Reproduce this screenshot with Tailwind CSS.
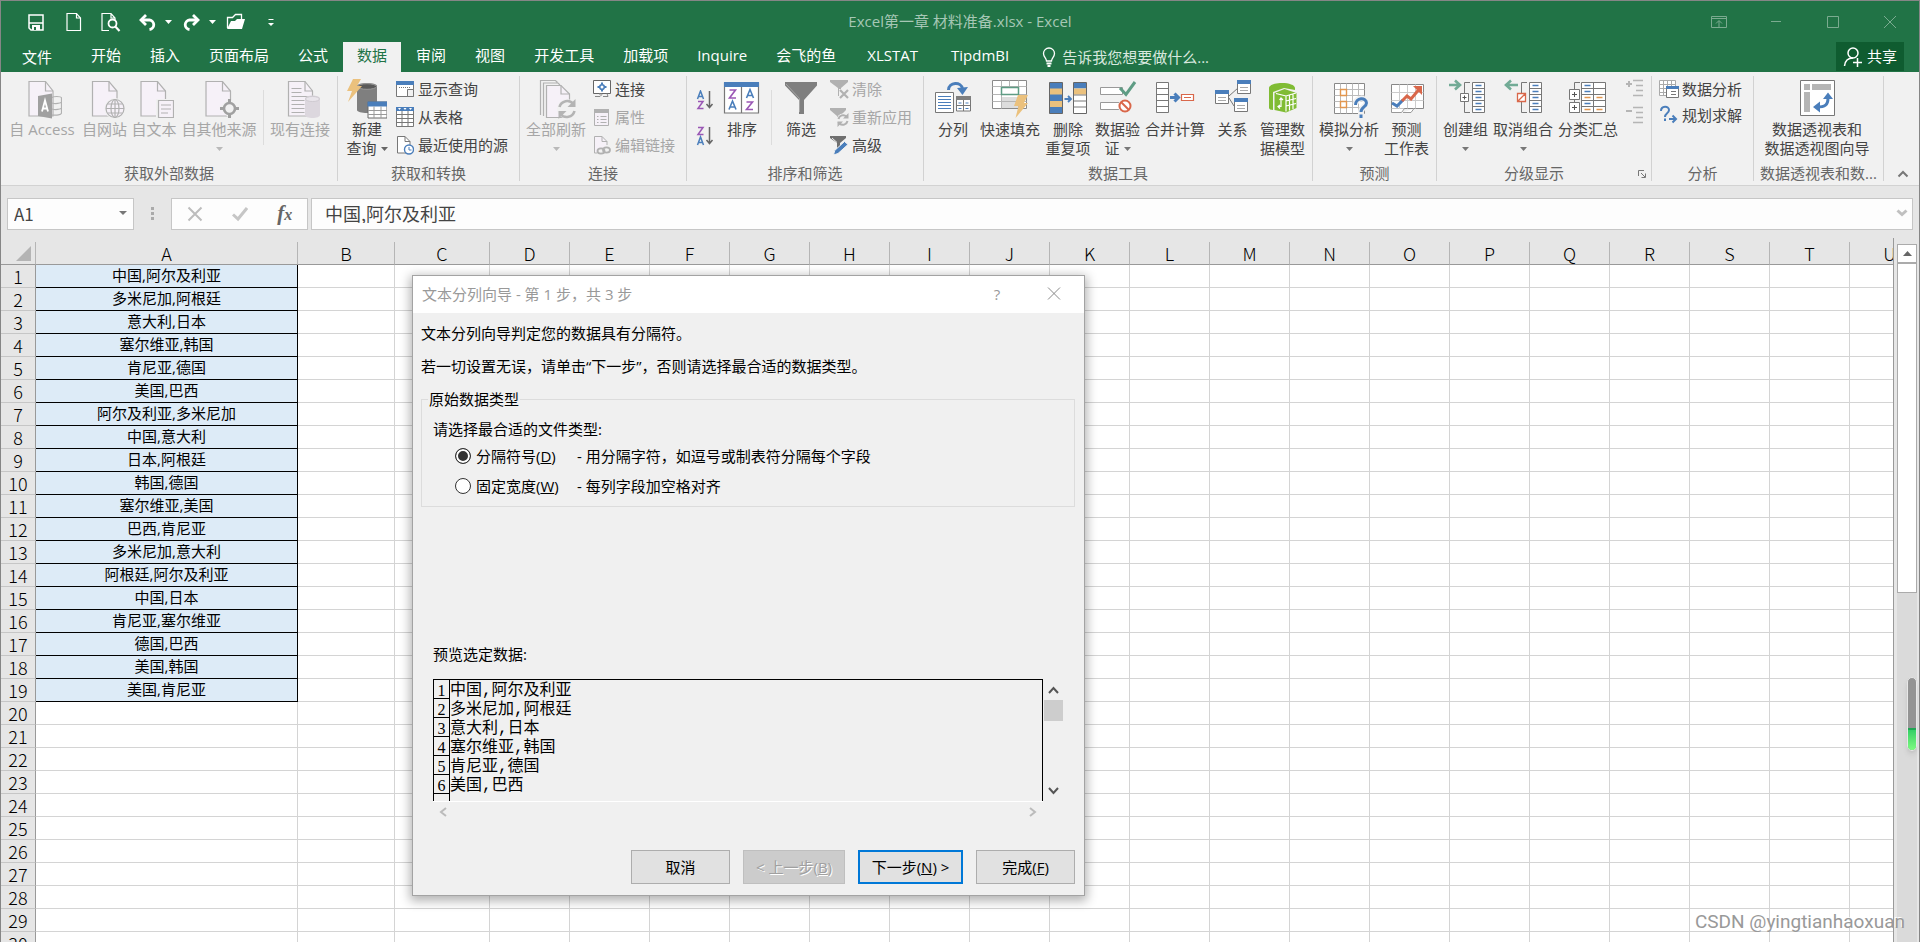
<!DOCTYPE html>
<html lang="zh-CN">
<head>
<meta charset="utf-8">
<title>Excel第一章 材料准备.xlsx - Excel</title>
<script src="https://cdn.jsdelivr.net/npm/@tailwindcss/browser@4"></script>
</head>
<body class="relative flex h-screen flex-col overflow-hidden border border-b-0 border-[#868686] bg-[#e6e6e6] font-['Open_Sans','Noto_Sans_CJK_SC',sans-serif] text-[15px] leading-[19px] text-[#444]">

<!-- Title bar -->
<header class="shrink-0 bg-[#217346] text-white">
  <div class="grid h-[41px] grid-cols-[1fr_auto_1fr] items-center">
    <div class="flex items-center pl-[27px]">
      <button aria-label="保存" class="w-[38px]"><svg class="h-5 w-4" viewBox="0 0 16 20" fill="none" stroke="#fff" stroke-width="1.5"><path d="M1 3h14v15H3l-2-2z"/><path d="M1 11h14"/><path d="M4 13h8v5H4z" fill="#fff" stroke="none"/><path d="M6 15h2v3H6z" fill="#217346" stroke="none"/></svg></button>
      <button aria-label="新建" class="w-[35px]"><svg class="h-5 w-4" viewBox="0 0 16 20" fill="none" stroke="#fff" stroke-width="1.200"><path d="M1 1.500h9.500l4 4.500v12.500H1z"/><path d="M10.500 1.500V6h4"/></svg></button>
      <button aria-label="打印预览" class="w-[37px]"><svg class="h-5 w-5" viewBox="0 0 20 20" fill="none" stroke="#fff" stroke-width="1.200"><path d="M8 18.500H1v-17h9l4 4.500v2M10 1.500V6h4"/><circle cx="11.500" cy="11.500" r="4" stroke-width="1.800"/><path d="M14.300 14.500l4.200 4.500" stroke-width="2.200"/></svg></button>
      <button aria-label="撤消" class="flex w-[44px] items-center gap-[7px]"><svg class="h-5 w-5" viewBox="0 0 20 20" fill="none" stroke="#fff" stroke-width="2.800"><path d="M3 8h8.500a5 4.800 0 0 1 0 9.500"/><path d="M8 3L3 8l5 5"/></svg><svg class="h-1 w-[7px]" viewBox="0 0 7 4"><path d="M0 0h7L3.500 4z" fill="#fff"/></svg></button>
      <button aria-label="恢复" class="flex w-[44px] items-center gap-[7px]"><svg class="h-5 w-5" viewBox="0 0 20 20" fill="none" stroke="#fff" stroke-width="2.800"><path d="M16 8H7.500a5 4.800 0 0 0 0 9.500"/><path d="M11 3l5 5-5 5"/></svg><svg class="h-1 w-[7px]" viewBox="0 0 7 4"><path d="M0 0h7L3.500 4z" fill="#fff"/></svg></button>
      <button aria-label="打开" class="w-[42px]"><svg class="h-5 w-5" viewBox="0 0 20 20"><path d="M1.500 16V5.500h5l3-3h6V7" fill="none" stroke="#fff" stroke-width="1.300"/><path d="M5 9h4l2-2h8l-3 10H1z" fill="#fff"/></svg></button>
      <button aria-label="自定义快速访问工具栏"><svg class="h-3 w-[6px]" viewBox="0 0 6 12"><path d="M.5 3.500h5" stroke="#fff"/><path d="M0 7h6L3 10z" fill="#fff"/></svg></button>
    </div>
    <h1 class="text-[#a6c7b5]">Excel第一章 材料准备.xlsx - Excel</h1>
    <div class="flex items-center justify-end gap-[41px] pr-[21px]">
      <button aria-label="功能区显示选项" class="w-4"><svg class="h-3 w-4" viewBox="0 0 16 12" fill="none" stroke="#7bab90"><path d="M.5.500h15v11H.5zM.5 2.500h15M8 11V5M5 7.500L8 4.500l3 3"/></svg></button>
      <button aria-label="最小化" class="w-4"><svg class="h-3 w-4" viewBox="0 0 16 12" fill="none" stroke="#7bab90"><path d="M3 5.500h10"/></svg></button>
      <button aria-label="最大化" class="w-4"><svg class="h-3 w-4" viewBox="0 0 16 12" fill="none" stroke="#7bab90"><path d="M2.500.500h11v11h-11z"/></svg></button>
      <button aria-label="关闭" class="w-4"><svg class="h-3 w-4" viewBox="0 0 16 12" fill="none" stroke="#7bab90"><path d="M2 0l12 12M14 0L2 12"/></svg></button>
    </div>
  </div>

  <nav class="flex h-[30px] items-center pr-[15px]" aria-label="功能区选项卡">
    <div class="flex h-full items-center gap-px whitespace-nowrap">
      <button class="ml-[7px] mr-[10px] h-full px-[14px]">文件</button>
      <button class="h-full px-[14px] pb-[3px]">开始</button>
      <button class="h-full px-[14px] pb-[3px]">插入</button>
      <button class="h-full px-[14px] pb-[3px]">页面布局</button>
      <button class="h-full px-[14px] pb-[3px]">公式</button>
      <button class="h-full bg-[#f1f1f1] px-[14px] pb-[3px] text-[#217346]">数据</button>
      <button class="h-full px-[14px] pb-[3px]">审阅</button>
      <button class="h-full px-[14px] pb-[3px]">视图</button>
      <button class="h-full px-[14px] pb-[3px]">开发工具</button>
      <button class="h-full px-[14px] pb-[3px]">加载项</button>
      <button class="h-full px-[14px] pb-[3px]">Inquire</button>
      <button class="h-full px-[14px] pb-[3px]">会飞的鱼</button>
      <button class="h-full px-4 pb-[3px]">XLSTAT</button>
      <button class="h-full px-4 pb-[3px]">TipdmBI</button>
      <button class="flex h-full items-center gap-[6px] px-4 text-[#d8e8df]"><svg class="h-5 w-[14px]" viewBox="0 0 14 20" fill="none" stroke="#fff" stroke-width="1.300"><path d="M4.500 14c0-3-3-4-3-7.500a5.500 5.500 0 0 1 11 0C12.500 10 9.500 11 9.500 14z"/><path d="M4.500 16.500h5M5.500 19h3" stroke-width="1.800"/></svg>告诉我您想要做什么...</button>
    </div>
    <button class="ml-auto flex h-[29px] w-[68px] items-center justify-center gap-1 self-start bg-[#0f5c30]"><svg class="h-5 w-[20px]" viewBox="0 0 20 20" fill="none" stroke="#fff" stroke-width="1.500"><circle cx="10" cy="6" r="5"/><path d="M1.500 19c.5-5 3-8 8.500-8M10 15.500h9M14.500 11v9"/></svg>共享</button>
  </nav>
</header>

<!-- Ribbon -->
<section aria-label="数据" class="flex h-[114px] shrink-0 items-start overflow-hidden whitespace-nowrap border-b border-[#d2d2d2] bg-[#f1f1f1]">

  <div class="w-[336px] shrink-0 pt-[6px]">
    <div class="flex h-[86px] items-start pl-[3px] text-[#a6a6a6]">
      <button disabled class="flex w-[76px] flex-col items-center pt-px">
        <svg class="h-[41px] w-10" viewBox="0 0 40 41" fill="none" stroke="#b1b1b1" stroke-width="1.200"><path d="M7 2.500h16.500L31 12v25H7z" fill="#f6f1f8"/><path d="M23.500 2.500V12H31"/><path d="M30 19c0-2 9.500-2 9.500 0v15c0 2-5 2.500-9.500 2M30 24c3 1 9 .5 9.500-1M30 30c3 1 9 .5 9.500-1"/><path d="M16 17l14-2.500v25L16 37z" fill="#a0a0a0" stroke="none"/><path d="M20 32.500l3-11 3 11M21 29.500h4.500" stroke="#fff" stroke-width="1.800"/></svg>
        <span>自 Access</span></button>
      <button disabled class="flex w-[49px] flex-col items-center pt-px">
        <svg class="h-[41px] w-10" viewBox="0 0 40 41" fill="none" stroke="#b1b1b1" stroke-width="1.200"><path d="M7.500 2.500H24L32 12v25H7.500z" fill="#f6f1f8"/><path d="M24 2.500V12h8"/><circle cx="30" cy="29.500" r="10.500" fill="#f1f1f1" stroke="none"/><circle cx="30" cy="29.500" r="9" fill="#f6f1f8"/><ellipse cx="30" cy="29.500" rx="4" ry="9"/><path d="M21 29.500h18M22.500 25h15M22.500 34h15M30 20.500v18"/></svg>
        <span>自网站</span></button>
      <button disabled class="flex w-[50px] flex-col items-center pt-px">
        <svg class="h-[41px] w-10" viewBox="0 0 40 41" fill="none" stroke="#b1b1b1" stroke-width="1.200"><path d="M7 2.500h16.500L31.500 12v25H7z" fill="#f6f1f8"/><path d="M23.500 2.500V12h8"/><path d="M22 20h18v20H22z" fill="#f1f1f1" stroke="none"/><path d="M24.500 21.500h15v17h-15z" fill="#f6f1f8"/><path d="M27 26h10M27 30h10M27 34h7"/></svg>
        <span>自文本</span></button>
      <button disabled class="flex w-[80px] flex-col items-center pt-px">
        <svg class="h-[41px] w-10" viewBox="0 0 40 41" fill="none" stroke="#b1b1b1" stroke-width="1.200"><path d="M7 2.500h16.500L31.500 12v25H7z" fill="#f6f1f8"/><path d="M23.500 2.500V12h8"/><path d="M20 29l10-10 10 10-10 10z" fill="#f1f1f1" stroke="none"/><circle cx="30.500" cy="29.500" r="5.500" stroke="#a0a0a0" stroke-width="2.600"/><path d="M30.500 20v4.500M30.500 34.500V39M21 29.500h4.500M35.500 29.500H40" stroke="#a0a0a0" stroke-width="3"/></svg>
        <span>自其他来源</span><svg class="mt-2 h-1 w-[7px]" viewBox="0 0 7 4"><path d="M0 0h7L3.500 4z" fill="#b9b9b9"/></svg></button>
      <div class="ml-1 mt-3 h-[55px] w-px bg-[#dcdcdc]"></div>
      <button disabled class="flex w-[72px] flex-col items-center pt-px">
        <svg class="h-[41px] w-10" viewBox="0 0 40 41" fill="none" stroke="#b1b1b1" stroke-width="1.200"><path d="M8.500 2.500H25L32.500 12v25h-24z" fill="#f6f1f8"/><path d="M25 2.500V12h7.500M11.500 9.500h10M11.500 13.500h10M11.500 17.500h18M11.500 21.500h13M11.500 25.500h13M11.500 29.500h13M11.500 33.500h13"/><path d="M25 19.500c0-4 15-4 15 0V36c0 4-15 4-15 0z" fill="#dcd7de" stroke="none"/><ellipse cx="32.500" cy="20" rx="7" ry="2.500" fill="#e9e5eb" stroke="#c9c5cb" stroke-width=".8"/></svg>
        <span>现有连接</span></button>
    </div>
    <h2 class="text-center text-[#666]">获取外部数据</h2>
  </div>
  <div class="mt-1 h-[105px] w-px shrink-0 bg-[#d2d2d2]"></div>

  <div class="w-[181px] shrink-0 pt-[6px]">
    <div class="flex h-[86px] items-start pl-[3px]">
      <button class="flex w-[52px] flex-col items-center pt-px">
        <svg class="h-[41px] w-10" viewBox="0 0 40 41"><path d="M10 7c0-4 20-4 20 0v24c0 4-20 4-20 0z" fill="#7f7f7f"/><ellipse cx="20" cy="7.500" rx="9.500" ry="2.800" fill="#595959" stroke="#999"/><path d="M6 0h8l-4 7h5L1 23l4-11H0z" fill="#ebc17d"/><path d="M21 23h19v16H21z" fill="#fff" stroke="#6b6b6b"/><path d="M20.500 22.500h20v5h-20z" fill="#4a7ebb"/><path d="M27 27.500V39M34 27.500V39M21 31.500h19M21 35.500h19" stroke="#999"/></svg>
        <span>新建</span><span class="flex items-center gap-1">查询<svg class="h-1 w-[7px]" viewBox="0 0 7 4"><path d="M0 0h7L3.500 4z" fill="#666"/></svg></span></button>
      <div class="ml-[3px] flex flex-col gap-[6px]">
        <button class="flex h-[22px] items-center gap-1"><svg class="h-5 w-[18px]" viewBox="0 0 18 20" fill="none" stroke="#777"><path d="M.5 3.500h17v14H.5z" fill="#fff"/><path d="M0 2h18v4H0z" fill="#4a7ebb" stroke="none"/><path d="M3 8.500h12" stroke-dasharray="1 1"/><path d="M11.500 10.500h6v7h-6z" fill="#f1f1f1"/></svg>显示查询</button>
        <button class="flex h-[22px] items-center gap-1"><svg class="h-5 w-[18px]" viewBox="0 0 18 20" fill="none" stroke="#777"><path d="M.5 2.500h17v17H.5z" fill="#fff"/><path d="M6 4v15M12 4v15M0 7.500h18M0 11.500h18M0 15.500h18"/><path d="M0 0h18v4H0z" fill="#4a7ebb" stroke="none"/><path d="M2 1h3L3.500 3zM7.500 1h3L9 3zM13 1h3l-1.500 2z" fill="#fff" stroke="none"/></svg>从表格</button>
        <button class="flex h-[22px] items-center gap-1"><svg class="h-5 w-[18px]" viewBox="0 0 18 20" fill="none" stroke="#777"><path d="M1.500 1.500H9l5 5V18H1.500z" fill="#fff"/><path d="M9 1.500v5h5"/><circle cx="13" cy="14.500" r="4.500" fill="#fff" stroke="#4a7ebb" stroke-width="1.400"/><path d="M13 12v3h2.500" stroke="#4a7ebb"/></svg>最近使用的源</button>
      </div>
    </div>
    <h2 class="text-center text-[#666]">获取和转换</h2>
  </div>
  <div class="mt-1 h-[105px] w-px shrink-0 bg-[#d2d2d2]"></div>

  <div class="w-[166px] shrink-0 pt-[6px]">
    <div class="flex h-[86px] items-start pl-1 text-[#a6a6a6]">
      <button disabled class="flex w-[64px] flex-col items-center pt-px">
        <svg class="h-[41px] w-10" viewBox="0 0 40 41" fill="none" stroke="#b1b1b1" stroke-width="1.200"><path d="M4.500 36V1.500h15l2 2M7.500 37V4H22l2 2"/><path d="M10.500 6.500H25L33.500 15v23.500h-23z" fill="#f6f1f8"/><path d="M25 6.500V15h8.500"/><circle cx="31" cy="30" r="10" fill="#f1f1f1" stroke="none"/><path d="M23.500 28a8 8 0 0 1 14-3M38.500 32a8 8 0 0 1-14 3" stroke="#b4b4b4" stroke-width="2.600"/><path d="M39.500 20v8h-8zM22.500 40v-8h8z" fill="#b4b4b4" stroke="none"/></svg>
        <span>全部刷新</span><svg class="mt-2 h-1 w-[7px]" viewBox="0 0 7 4"><path d="M0 0h7L3.500 4z" fill="#b9b9b9"/></svg></button>
      <div class="ml-[5px] flex flex-col gap-[6px]">
        <button class="flex h-[22px] items-center gap-1 text-[#444]"><svg class="h-5 w-[18px]" viewBox="0 0 18 20" fill="none" stroke="#666"><path d="M.5 1.500h17v13H.5z" fill="#fff"/><circle cx="9" cy="8" r="2.300" stroke="#4a7ebb" stroke-width="1.600"/><path d="M9 3.500v2M9 10.500v2M4.500 8h2M11.500 8h2" stroke="#4a7ebb" stroke-width="2"/><path d="M2 17.500h5l2-2M10 17.500h5l-1-3M6 15h3" stroke="#888"/></svg>连接</button>
        <button disabled class="flex h-[22px] items-center gap-1"><svg class="h-5 w-[18px]" viewBox="0 0 18 20" fill="none" stroke="#b1b1b1"><path d="M1.500 2.500h14v16h-14z" fill="#f6f1f8"/><path d="M1 2h15v4H1z" fill="#b1b1b1" stroke="none"/><path d="M7.500 9.500h6M7.500 12.500h6M7.500 15.500h6M4 9.500h1.500M4 12.500h1.500M4 15.500h1.500"/></svg>属性</button>
        <button disabled class="flex h-[22px] items-center gap-1"><svg class="h-5 w-[18px]" viewBox="0 0 18 20" fill="none" stroke="#b1b1b1"><path d="M1.500 18V1.500H9l5 5V10" fill="#f6f1f8"/><path d="M9 1.500v5h5M1.500 18H4"/><ellipse cx="8" cy="16" rx="3.500" ry="2.600" stroke-width="1.800"/><ellipse cx="13.500" cy="15" rx="3.500" ry="2.600" stroke-width="1.800"/></svg>编辑链接</button>
      </div>
    </div>
    <h2 class="text-center text-[#666]">连接</h2>
  </div>
  <div class="mt-1 h-[105px] w-px shrink-0 bg-[#d2d2d2]"></div>

  <div class="w-[236px] shrink-0 pt-[6px]">
    <div class="flex h-[86px] items-start pl-2">
      <div class="flex flex-col gap-4 pt-3">
        <button aria-label="升序" class="h-5 w-5"><svg class="h-5 w-5" viewBox="0 0 20 20" fill="none" stroke-width="1.500"><path d="M2.500 9l3-8 3 8M3.500 6.500h4" stroke="#4a7ebb"/><path d="M3 11.500h5L3 18.500h5.500" stroke="#9a57b5"/><path d="M14.500 1v16M11.500 14l3 3.500 3-3.500" stroke="#666"/></svg></button>
        <button aria-label="降序" class="h-5 w-5"><svg class="h-5 w-5" viewBox="0 0 20 20" fill="none" stroke-width="1.500"><path d="M3 1.500h5L3 8.500h5.500" stroke="#9a57b5"/><path d="M2.500 19l3-8 3 8M3.500 16.500h4" stroke="#4a7ebb"/><path d="M14.500 1v16M11.500 14l3 3.500 3-3.500" stroke="#666"/></svg></button>
      </div>
      <button class="ml-[5px] flex w-[44px] flex-col items-center pt-px">
        <svg class="h-[41px] w-10" viewBox="0 0 40 41" fill="none" stroke-width="1.600"><path d="M2.500 4v30h34V4zM19.500 4v30" fill="#fff" stroke="#777" stroke-width="1.200"/><path d="M2 3h35v5H2z" fill="#4a7ebb"/><path d="M7.500 11h6l-6 8h6.500M24.500 23h6l-6 7.500h6.500" stroke="#9a57b5"/><path d="M7 30.500l3.500-8.500 3.500 8.500M8.500 28h4.500M24.500 19L28 10.500l3.500 8.500M26 16.500h4.500" stroke="#4a7ebb"/></svg>
        <span>排序</span></button>
      <div class="ml-[7px] mt-3 h-[55px] w-px bg-[#dcdcdc]"></div>
      <button class="ml-[7px] flex w-[44px] flex-col items-center pt-px">
        <svg class="h-[41px] w-10" viewBox="0 0 40 41"><path d="M4 3h32v3.500L23 21v14h-5V21L4 6.500z" fill="#7f7f7f"/><path d="M5 5l13.500 14.500V33" fill="none" stroke="#a5a5a5"/></svg>
        <span>筛选</span></button>
      <div class="ml-[6px] flex flex-col gap-[6px]">
        <button disabled class="flex h-[22px] items-center gap-[3px] text-[#a6a6a6]"><svg class="h-5 w-5" viewBox="0 0 20 20"><path d="M1 1h18v2l-7 6v8H9V9L1 3z" fill="#b1b1b1"/><path d="M10 10h10v10H10z" fill="#f1f1f1"/><path d="M11 11l8 8M19 11l-8 8" stroke="#b1b1b1" stroke-width="2.200"/></svg>清除</button>
        <button disabled class="flex h-[22px] items-center gap-[3px] text-[#a6a6a6]"><svg class="h-5 w-5" viewBox="0 0 20 20"><path d="M1 1h16v2l-6 6v7H8V9L1 3z" fill="#b1b1b1"/><circle cx="14" cy="13" r="6.500" fill="#f1f1f1"/><path d="M9.500 12a4.800 4.800 0 0 1 8-2.500M18.500 14a4.800 4.800 0 0 1-8 2.500" fill="none" stroke="#b1b1b1" stroke-width="2"/><path d="M19.500 6v5.500H14zM8.500 20v-5.500H14z" fill="#b1b1b1"/></svg>重新应用</button>
        <button class="flex h-[22px] items-center gap-[3px]"><svg class="h-5 w-5" viewBox="0 0 20 20"><path d="M1 1h16v2l-6 5v8H8V8L1 3z" fill="#6f6f6f"/><path d="M3 3l5 4.500" stroke="#f1f1f1"/><path d="M4.500 20l1.200-4.500L15.500 6.500 19 9.500l-10 9z" fill="#4a7ebb" stroke="#f1f1f1"/></svg>高级</button>
      </div>
    </div>
    <h2 class="text-center text-[#666]">排序和筛选</h2>
  </div>
  <div class="mt-1 h-[105px] w-px shrink-0 bg-[#d2d2d2]"></div>

  <div class="w-[388px] shrink-0 pt-[6px]">
    <div class="flex h-[86px] items-start pl-[6px]">
      <button class="flex w-[46px] flex-col items-center pt-px">
        <svg class="h-[41px] w-10" viewBox="0 0 40 41" fill="none"><path d="M2.500 13.500h18v20h-18z" fill="#fff" stroke="#777"/><path d="M5 17.500h13M5 20.500h13M5 23.500h13M5 26.500h13M5 29.500h13" stroke="#4a7ebb" stroke-width="1.200"/><path d="M23.500 18.500h14v13.500h-14zM30.500 18.500V32M23.500 26.500h14" fill="#fff" stroke="#777"/><path d="M23 17h15v4H23z" fill="#7f7f7f"/><path d="M25.500 24h3M32.500 24h3M25.500 29.500h3M32.500 29.500h3" stroke="#4a7ebb"/><path d="M15.500 11c0-8 13-9 14-1" stroke="#4a7ebb" stroke-width="3"/><path d="M24 9l5.500 7L35 8" fill="#4a7ebb"/></svg>
        <span>分列</span></button>
      <button class="flex w-[68px] flex-col items-center pt-px">
        <svg class="h-[41px] w-10" viewBox="0 0 40 41" fill="none"><path d="M2.500 1.500h34v28h-34z" fill="#fff" stroke="#8a8a8a"/><path d="M11 18h17v11H11z" fill="#ddd"/><path d="M11.500 1.500v28M28.500 1.500v28M2.500 7.500h34M2.500 15.500h34M2.500 22.500h34M19.500 1.500v6" stroke="#b5b5b5"/><path d="M11.500 8.500h17v7h-17z" fill="#fff" stroke="#5e9c84" stroke-width="1.500"/><path d="M28 16h10l-4 8h4L25.500 39l3-12H24z" fill="#ebc17d"/></svg>
        <span>快速填充</span></button>
      <button class="flex w-[48px] flex-col items-center pt-px">
        <svg class="h-[41px] w-10" viewBox="0 0 40 41" fill="none"><path d="M1.500 3.500h13v31h-13z" fill="#4a7ebb" stroke="#666"/><path d="M2 9.500h12v6H2zM2 22h12v6H2z" fill="#ebc17d"/><path d="M25.500 3.500h13v31h-13z" fill="#fff" stroke="#666"/><path d="M26 4h12v5.500H26z" fill="#4a7ebb"/><path d="M26 9.500h12v6H26z" fill="#ebc17d"/><path d="M25.500 16h13M25.500 22h13M25.500 28h13" stroke="#777"/><path d="M16.500 20H23M20 17l3 3-3 3" stroke="#4a7ebb" stroke-width="1.800"/></svg>
        <span>删除</span><span>重复项</span></button>
      <button class="flex w-[51px] flex-col items-center pt-px">
        <svg class="h-[41px] w-10" viewBox="0 0 40 41" fill="none"><path d="M2.500 8.500h22v7h-22zM2.500 23.500h24v7h-24z" fill="#fff" stroke="#999"/><path d="M22 9l6 6.500L37 3" stroke="#5e9c84" stroke-width="3"/><circle cx="27" cy="27" r="7" fill="#f1f1f1"/><circle cx="27" cy="27" r="5.500" stroke="#d9674a" stroke-width="2" fill="#fff"/><path d="M23 23l8 8" stroke="#d9674a" stroke-width="2"/></svg>
        <span>数据验</span><span class="flex items-center gap-1">证<svg class="h-1 w-[7px]" viewBox="0 0 7 4"><path d="M0 0h7L3.500 4z" fill="#777"/></svg></span></button>
      <button class="flex w-[64px] flex-col items-center pt-px">
        <svg class="h-[41px] w-10" viewBox="0 0 40 41" fill="none"><path d="M1.500 3.500h12v30h-12zM1.500 9.500h12M1.500 15.500h12M1.500 21.500h12M1.500 27.500h12" fill="#fff" stroke="#777"/><path d="M15 18.500h8M19.500 14.500l4 4-4 4" stroke="#4a7ebb" stroke-width="3"/><path d="M26.500 15.500h12v6h-12zM29 18.500h7" fill="#fff" stroke="#d9674a" stroke-width="1.200"/></svg>
        <span>合并计算</span></button>
      <button class="flex w-[51px] flex-col items-center pt-px">
        <svg class="h-[41px] w-10" viewBox="0 0 40 41" fill="none"><path d="M16 17l9-8M16 19l5 8" stroke="#777"/><path d="M2.500 11.500h13v13h-13zM24.500 1.500h13v13h-13zM21.500 19.500h13v13h-13z" fill="#fff" stroke="#777"/><path d="M2 11h14v4H2zM24 1h14v4H24zM21 19h14v4H21z" fill="#4a7ebb"/><path d="M5 18.500h8M5 21.500h8M27 8.500h8M27 11.500h8M24 26.500h8M24 29.500h8" stroke="#aaa"/></svg>
        <span>关系</span></button>
      <button class="flex w-[49px] flex-col items-center pt-px">
        <svg class="h-[41px] w-10" viewBox="0 0 40 41" fill="none"><path d="M6 9c0-3 6-5 13-5s13 2 13 5v2l-11-2-11 4v18c-2 0-4-1-4-2z" fill="#80bc34"/><path d="M11.500 14l10-4 12 4v15L23 33.500 11.500 31z" fill="#80bc34"/><path d="M23 17.500v15M13 14.500l10 2.500 10-3M26.500 16v15.500M30 15v15M23 22l10-2.500M23 27l10-2.500" stroke="#fff" stroke-width="1.200"/><path d="M18 19.500v8h-2.500M16.500 21l1.500-2 2 2M17 26l-2 1.500 2 2" stroke="#fff" stroke-width="1.200"/></svg>
        <span>管理数</span><span>据模型</span></button>
    </div>
    <h2 class="text-center text-[#666]">数据工具</h2>
  </div>
  <div class="mt-1 h-[105px] w-px shrink-0 bg-[#d2d2d2]"></div>

  <div class="w-[123px] shrink-0 pt-[6px]">
    <div class="flex h-[86px] items-start pl-[3px]">
      <button class="flex w-[66px] flex-col items-center pt-px">
        <svg class="h-[41px] w-10" viewBox="0 0 40 41" fill="none"><path d="M5.500 4.500h30v30h-30z" fill="#fff" stroke="#888"/><path d="M11.500 4.500v30M17.500 4.500v30M23.500 4.500v30M29.500 4.500v30M5.500 10.500h30M5.500 16.500h30M5.500 22.500h30M5.500 28.500h30" stroke="#bbb"/><path d="M11.500 10.500h6v6h-6zM11.500 22.500h6v6h-6z" fill="#fff" stroke="#e2964e" stroke-width="1.400"/><path d="M26.500 25c0-7 11-7 11-1 0 4-5.500 4-5.500 9v6" stroke="#f1f1f1" stroke-width="6"/><path d="M26.500 26c0-8 11-8 11-2 0 4-5.500 4-5.500 9M32 35.500v3.500" stroke="#4a7ebb" stroke-width="3"/></svg>
        <span>模拟分析</span><svg class="mt-2 h-1 w-[7px]" viewBox="0 0 7 4"><path d="M0 0h7L3.500 4z" fill="#777"/></svg></button>
      <button class="flex w-[49px] flex-col items-center pt-px">
        <svg class="h-[41px] w-10" viewBox="0 0 40 41" fill="none"><path d="M4.500 5.500h32v24h-32z" fill="#fff" stroke="#888"/><path d="M12.500 5.500v24M20.500 5.500v24M28.500 5.500v24M4.500 13.500h32M4.500 21.500h32" stroke="#ccc"/><path d="M4.500 29.500v4h10l3-4M16 33.500h8l3-4" fill="#fff" stroke="#999"/><path d="M5 24l5 3 6-6" stroke="#4a7ebb" stroke-width="3"/><path d="M15 22l5-5 4 3 10-12" stroke="#d9674a" stroke-width="3"/><path d="M26 7h9v9z" fill="#d9674a"/></svg>
        <span>预测</span><span>工作表</span></button>
    </div>
    <h2 class="text-center text-[#666]">预测</h2>
  </div>
  <div class="mt-1 h-[105px] w-px shrink-0 bg-[#d2d2d2]"></div>

  <div class="w-[214px] shrink-0 pt-[6px]">
    <div class="flex h-[86px] items-start pl-1">
      <button class="flex w-[49px] flex-col items-center pt-px">
        <svg class="h-[41px] w-10" viewBox="0 0 40 41" fill="none"><path d="M3 6h10M9 1.500L14 6l-5 4.500" stroke="#72ab96" stroke-width="2.600"/><path d="M24 3.500h-5.500v30H24" stroke="#777"/><path d="M14.500 14.500h8v8h-8z" fill="#fff" stroke="#777"/><path d="M16.500 18.500h4M18.500 16.500v4" stroke="#555"/><path d="M26.500 3.500h12v30h-12zM26.500 9.500h12M26.500 15.500h12M26.500 21.500h12M26.500 27.500h12" fill="#fff" stroke="#777"/><path d="M29.500 6.500h6M29.500 12.500h6M29.500 18.500h6M29.500 24.500h6M29.500 30.500h6" stroke="#4a7ebb" stroke-width="1.300"/></svg>
        <span>创建组</span><svg class="mt-2 h-1 w-[7px]" viewBox="0 0 7 4"><path d="M0 0h7L3.500 4z" fill="#777"/></svg></button>
      <button class="flex w-[66px] flex-col items-center pt-px">
        <svg class="h-[41px] w-10" viewBox="0 0 40 41" fill="none"><path d="M15 6H4M8 1.500L3 6l5 4.500" stroke="#72ab96" stroke-width="2.600"/><path d="M24 3.500h-5.500v30H24" stroke="#777"/><path d="M14.500 14.500h8v8h-8zM14.500 22.500l8-8" fill="#fff" stroke="#d9674a" stroke-width="1.300"/><path d="M26.500 3.500h12v30h-12zM26.500 9.500h12M26.500 15.500h12M26.500 21.500h12M26.500 27.500h12" fill="#fff" stroke="#777"/><path d="M29.500 6.500h6M29.500 12.500h6M29.500 18.500h6M29.500 24.500h6M29.500 30.500h6" stroke="#4a7ebb" stroke-width="1.300"/></svg>
        <span>取消组合</span><svg class="mt-2 h-1 w-[7px]" viewBox="0 0 7 4"><path d="M0 0h7L3.500 4z" fill="#777"/></svg></button>
      <button class="flex w-[64px] flex-col items-center pt-px">
        <svg class="h-[41px] w-10" viewBox="0 0 40 41" fill="none"><path d="M12 3.500H6.500v30H12M6.500 18.500H12" stroke="#777"/><path d="M1.500 10.500h10v10h-10zM1.500 23.500h10v10h-10z" fill="#fff" stroke="#777"/><path d="M4 15.500h5M6.500 13v5M4 28.500h5M6.500 26v5" stroke="#555"/><path d="M13.500 3.500h24v30h-24zM25.500 3.500v30M13.500 9.500h24M13.500 15.500h24M13.500 21.500h24M13.500 27.500h24" fill="#fff" stroke="#777"/><path d="M16.500 6.500h6M16.500 12.500h6M16.500 24.500h6" stroke="#4a7ebb" stroke-width="1.300"/><path d="M16.500 18.500h6M28.500 18.500h6M16.500 30.500h6M28.500 30.500h6" stroke="#e2964e" stroke-width="1.300"/></svg>
        <span>分类汇总</span></button>
      <div class="ml-[6px] flex flex-col gap-[6px]">
        <button disabled aria-label="显示明细数据" class="h-[20px]"><svg class="h-5 w-[18px]" viewBox="0 0 18 20" fill="none" stroke="#b5b5b5" stroke-width="1.300"><path d="M0 6h6M3 3v6" stroke-width="2"/><path d="M7 2.500h10M10 7.500h7M10 12.500h7M7 17.500h10"/></svg></button>
        <button disabled aria-label="隐藏明细数据" class="h-[20px]"><svg class="h-5 w-[18px]" viewBox="0 0 18 20" fill="none" stroke="#b5b5b5" stroke-width="1.300"><path d="M0 7h6" stroke-width="2"/><path d="M7 3.500h10M10 8.500h7M10 13.500h7M7 18.500h10"/></svg></button>
      </div>
    </div>
    <div class="flex items-center pl-[67px] pr-[5px] text-[#666]"><h2>分级显示</h2><button aria-label="分级显示设置" class="ml-auto"><svg class="h-2 w-2" viewBox="0 0 8 8" fill="none" stroke="#777"><path d="M.5 6V.500H6M3 3l4 4M7.500 3.500v4h-4"/></svg></button></div>
  </div>
  <div class="mt-1 h-[105px] w-px shrink-0 bg-[#d2d2d2]"></div>

  <div class="w-[101px] shrink-0 pt-[6px]">
    <div class="flex h-[86px] flex-col items-start gap-1 pl-[7px]">
      <button class="flex h-[22px] items-center gap-[3px]"><svg class="h-5 w-5" viewBox="0 0 20 20" fill="none"><path d="M.5 1.500h16v15H.5zM4.500 1.500v15M8.500 1.500v15M12.500 1.500v15M.5 5.500h16M.5 9.500h16M.5 13.500h16" fill="#fff" stroke="#aaa"/><path d="M7.500 8.500h12v10h-12z" fill="#fff" stroke="#777"/><path d="M7 7h13v3H7z" fill="#4a7ebb"/><path d="M12 12.500h5M12 15.500h5" stroke="#777"/></svg>数据分析</button>
      <button class="flex h-[22px] items-center gap-[3px]"><svg class="h-5 w-5" viewBox="0 0 20 20" fill="none" stroke="#4a7ebb" stroke-width="2"><path d="M2 6c0-5.500 8-5.500 8-1 0 3.500-4 3-4 7M6 13.500V16M10 14h7M13.500 10.500L17 14l-3.500 3.500"/></svg>规划求解</button>
    </div>
    <h2 class="text-center text-[#666]">分析</h2>
  </div>
  <div class="mt-1 h-[105px] w-px shrink-0 bg-[#d2d2d2]"></div>

  <div class="w-[129px] shrink-0 pt-[6px]">
    <div class="flex h-[86px] items-start">
      <button class="flex w-[126px] flex-col items-center pt-px">
        <svg class="h-[41px] w-10" viewBox="0 0 40 41" fill="none"><path d="M3.500 1.500h34v35h-34z" fill="#fff" stroke="#777"/><path d="M7 5h6v6H7zM15 5h19v6H15zM7 13h6v20H7z" fill="#b5b5b5"/><path d="M20 28c8 0 11-2 11-9" stroke="#4a7ebb" stroke-width="3"/><path d="M16 28l7-5.500v11zM26 20l5-6.500 5 6.500z" fill="#4a7ebb"/></svg>
        <span>数据透视表和</span><span>数据透视图向导</span></button>
    </div>
    <h2 class="text-center text-[#666]">数据透视表和数...</h2>
  </div>
  <div class="mt-1 h-[105px] w-px shrink-0 bg-[#d2d2d2]"></div>
  <button aria-label="折叠功能区" class="ml-[13px] mt-[98px]"><svg class="block h-2 w-3" viewBox="0 0 12 8" fill="none" stroke="#777" stroke-width="2"><path d="M1.500 6.500L6 2l4.500 4.500"/></svg></button>
</section>

<!-- Formula bar -->
<section aria-label="编辑栏" class="flex shrink-0 items-center px-[6px] pb-2 pt-3">
  <div class="flex h-8 w-[127px] items-center border border-[#c6c6c6] bg-[#fdfdfd] pb-[2px] pl-[6px] pr-[6px]">
    <input aria-label="名称框" value="A1" class="min-w-0 flex-1 bg-transparent font-['Noto_Sans_CJK_SC',sans-serif] text-[17px] outline-none">
    <button aria-label="名称列表"><svg class="h-1 w-2" viewBox="0 0 8 4"><path d="M0 0h8L4 4z" fill="#777"/></svg></button>
  </div>
  <svg class="ml-[17px] h-4 w-[3px]" viewBox="0 0 3 16" fill="#aaa"><path d="M0 1h3v3H0zM0 6h3v3H0zM0 11h3v3H0z"/></svg>
  <div class="ml-[17px] flex h-8 w-[137px] items-center justify-around border border-[#c6c6c6] bg-[#fdfdfd]">
    <button aria-label="取消输入"><svg class="h-4 w-4" viewBox="0 0 16 16" stroke="#bdbdbd" stroke-width="2"><path d="M1.500 1.500l13 13M14.500 1.500l-13 13"/></svg></button>
    <button aria-label="输入"><svg class="h-4 w-4" viewBox="0 0 16 16" fill="none" stroke="#c6c6c6" stroke-width="3"><path d="M1 8.500L6 13l9-11"/></svg></button>
    <button aria-label="插入函数" class="font-['Liberation_Serif',serif] text-[21px] font-bold italic text-[#666]">f<span class="text-[16px]">x</span></button>
  </div>
  <div class="ml-[3px] flex h-8 flex-1 items-center border border-[#c6c6c6] bg-[#fdfdfd] pb-[2px] pl-[13px] pr-1">
    <input aria-label="公式" value="中国,阿尔及利亚" class="min-w-0 flex-1 bg-transparent font-['Noto_Sans_CJK_SC',sans-serif] text-[18px] outline-none">
    <button aria-label="展开编辑栏"><svg class="h-2 w-3" viewBox="0 0 12 8" fill="none" stroke="#c0c0c0" stroke-width="3"><path d="M1.500 1.500L6 5.500l4.500-4"/></svg></button>
  </div>
</section>

<!-- Worksheet -->
<main class="flex min-h-0 flex-1 pr-[2px]">
  <div class="min-w-0 flex-1 overflow-hidden border-r border-[#999] pt-1">
    <table class="w-max table-fixed border-separate border-spacing-0 text-center">
      <colgroup id="cols"></colgroup>
      <thead><tr id="head" class="h-[23px]"></tr></thead>
      <tbody id="rows"></tbody>
    </table>
  </div>
  <div class="ml-[3px] mt-[6px] flex w-[20px] flex-col bg-[#dadada]">
    <button aria-label="向上滚动" class="flex h-[19px] items-center justify-center border border-[#ababab] bg-white"><svg class="h-[5px] w-[9px]" viewBox="0 0 9 5"><path d="M0 5h9L4.500 0z" fill="#666"/></svg></button>
    <div class="h-[330px] border border-[#ababab] bg-white"></div>
  </div>
</main>

<!-- Text to Columns wizard -->
<div role="dialog" aria-label="文本分列向导" class="absolute left-[411px] top-[274px] flex w-[673px] flex-col border border-[#a3a3a3] bg-[#f0f0f0] text-[15px] leading-5 text-black shadow-[0_3px_10px_2px_rgba(0,0,0,0.3)]">
  <div class="flex h-[37px] items-center bg-white pb-[2px] pl-[9px] pr-[22px] text-[#999]">
    <span>文本分列向导 - 第 1 步，共 3 步</span>
    <button aria-label="帮助" class="ml-auto w-4">?</button>
    <button aria-label="关闭" class="ml-[41px]"><svg class="h-[13px] w-4" viewBox="0 0 16 13" stroke="#888"><path d="M2 .5l12 12M14 .5l-12 12"/></svg></button>
  </div>
  <div class="pb-[11px] pl-2 pr-[9px] pt-[10px]">
    <p>文本分列向导判定您的数据具有分隔符。</p>
    <p class="mt-[13px]">若一切设置无误，请单击“下一步”，否则请选择最合适的数据类型。</p>
    <fieldset class="mt-[13px] border border-[#dcdcdc] pb-[10px] pl-[11px]">
      <legend class="-ml-[5px] px-px">原始数据类型</legend>
      <p class="mt-[10px]">请选择最合适的文件类型:</p>
      <div class="ml-[22px] mt-[7px] flex items-center">
        <input type="radio" name="kind" id="kd" checked class="h-4 w-4 appearance-none rounded-full border border-[#333] bg-white checked:bg-[#333] checked:shadow-[inset_0_0_0_2px_white]">
        <label for="kd" class="ml-[5px] w-[101px]">分隔符号(<u>D</u>)</label><span>- 用分隔字符，如逗号或制表符分隔每个字段</span>
      </div>
      <div class="ml-[22px] mt-[10px] flex items-center">
        <input type="radio" name="kind" id="kw" class="h-4 w-4 appearance-none rounded-full border border-[#333] bg-white checked:bg-[#333] checked:shadow-[inset_0_0_0_2px_white]">
        <label for="kw" class="ml-[5px] w-[101px]">固定宽度(<u>W</u>)</label><span>- 每列字段加空格对齐</span>
      </div>
    </fieldset>
    <p class="ml-3 mt-[137px]">预览选定数据:</p>
    <div class="ml-3 mt-[15px] flex">
      <div class="h-[122px] w-[610px] overflow-hidden border border-b-0 border-black">
        <table class="w-full table-fixed border-separate border-spacing-0 text-[16px] leading-[18px]">
          <colgroup><col class="w-4"><col></colgroup>
          <tbody id="preview" class="font-['Liberation_Mono','Noto_Sans_CJK_SC',monospace]"></tbody>
        </table>
      </div>
      <div class="flex w-[20px] flex-col items-center">
        <button aria-label="上移" class="flex h-[21px] items-center"><svg class="h-2 w-[11px]" viewBox="0 0 11 8" fill="none" stroke="#555" stroke-width="2"><path d="M1 7l4.500-5L10 7"/></svg></button>
        <div class="h-[21px] w-[19px] bg-[#cdcdcd]"></div>
        <button aria-label="下移" class="mt-auto flex h-[21px] items-center"><svg class="h-2 w-[11px]" viewBox="0 0 11 8" fill="none" stroke="#555" stroke-width="2"><path d="M1 1l4.500 5L10 1"/></svg></button>
      </div>
    </div>
    <div class="ml-3 flex h-[20px] w-[610px] items-center justify-between border-t border-white px-[6px]">
      <button aria-label="左移"><svg class="block h-[10px] w-2" viewBox="0 0 8 10" fill="none" stroke="#bbb" stroke-width="2"><path d="M7 1L2 5l5 4"/></svg></button>
      <button aria-label="右移"><svg class="block h-[10px] w-2" viewBox="0 0 8 10" fill="none" stroke="#bbb" stroke-width="2"><path d="M1 1l5 4-5 4"/></svg></button>
    </div>
    <div class="mt-[29px] flex h-[34px] justify-end gap-[13px]">
      <button class="w-[99px] border border-[#adadad] bg-[#e1e1e1]">取消</button>
      <button disabled class="w-[102px] border border-[#bfbfbf] bg-[#ccc] text-[#a0a0a0] [text-shadow:1px_1px_0_white]">&lt; 上一步(<u>B</u>)</button>
      <button class="w-[105px] border-2 border-[#0078d7] bg-[#e1e1e1]">下一步(<u>N</u>) &gt;</button>
      <button class="w-[99px] border border-[#adadad] bg-[#e1e1e1]">完成(<u>F</u>)</button>
    </div>
  </div>
</div>

<!-- Floating meter and watermark -->
<div class="absolute right-[2px] top-[676px] flex h-[74px] w-[10px] flex-col justify-end overflow-hidden rounded-full border border-[#e8e8e8] bg-[#949494] shadow-md"><div class="h-[22px] border-t-2 border-[#1fa653] bg-linear-to-b from-[#33cf66] to-[#7dfb82]"></div></div>
<div class="absolute bottom-[6px] right-[14px] font-['Roboto',sans-serif] text-[19px] leading-7 text-[#999] [text-shadow:-1px_-1px_0_white]">CSDN @yingtianhaoxuan</div>

<script>
const countries = ['中国,阿尔及利亚','多米尼加,阿根廷','意大利,日本','塞尔维亚,韩国','肯尼亚,德国','美国,巴西','阿尔及利亚,多米尼加','中国,意大利','日本,阿根廷','韩国,德国','塞尔维亚,美国','巴西,肯尼亚','多米尼加,意大利','阿根廷,阿尔及利亚','中国,日本','肯尼亚,塞尔维亚','德国,巴西','美国,韩国','美国,肯尼亚'];
const letters = [...'ABCDEFGHIJKLMNOPQRSTU'];
const widths = { A: 'w-[262px]', B: 'w-[97px]', C: 'w-[95px]' };
document.getElementById('cols').innerHTML = '<col class="w-[35px]">' + letters.map(l => `<col class="${widths[l] || 'w-[80px]'}">`).join('');
const headCell = "border-b border-r border-b-[#999] border-r-[#b5b5b5] p-0 font-['Noto_Sans_CJK_SC',sans-serif] text-[18px] leading-[22px] font-light text-black";
document.getElementById('head').innerHTML = `<th class="${headCell}"><svg class="ml-auto mr-1 h-[15px] w-[15px]" viewBox="0 0 15 15"><path d="M15 0v15H0z" fill="#b4b4b4"/></svg></th>` + letters.map(l => `<th class="${headCell}">${l}</th>`).join('');
const rowHead = "border-b border-r border-b-[#c6c6c6] border-r-[#999] bg-[#e6e6e6] p-0 font-['Noto_Sans_CJK_SC',sans-serif] text-[18px] leading-[22px] font-light text-black";
const blank = '<td class="border-b border-r border-[#d4d4d4] bg-white p-0"></td>';
let html = '';
for (let r = 1; r <= 30; r++) {
  const name = countries[r - 1];
  html += `<tr class="h-[23px]"><th class="${rowHead}">${r}</th>` +
    (name ? `<td class="border-b border-r border-black bg-[#ddebf7] p-0 pb-[2px] leading-[20px] text-black">${name}</td>` : blank) +
    blank.repeat(letters.length - 1) + '</tr>';
}
document.getElementById('rows').innerHTML = html;
document.getElementById('preview').innerHTML = countries.slice(0, 6).map((n, i) =>
  `<tr class="h-[19px]"><td class="border-b border-r border-black p-0 pt-[3px] text-center font-['Liberation_Serif',serif] leading-[15px]">${i + 1}</td><td class="whitespace-nowrap p-0 pt-[3px] leading-[16px]">${n}</td></tr>`).join('') +
  '<tr class="h-[19px]"><td class="border-r border-black p-0"></td><td class="p-0"></td></tr>';
</script>
</body>
</html>
